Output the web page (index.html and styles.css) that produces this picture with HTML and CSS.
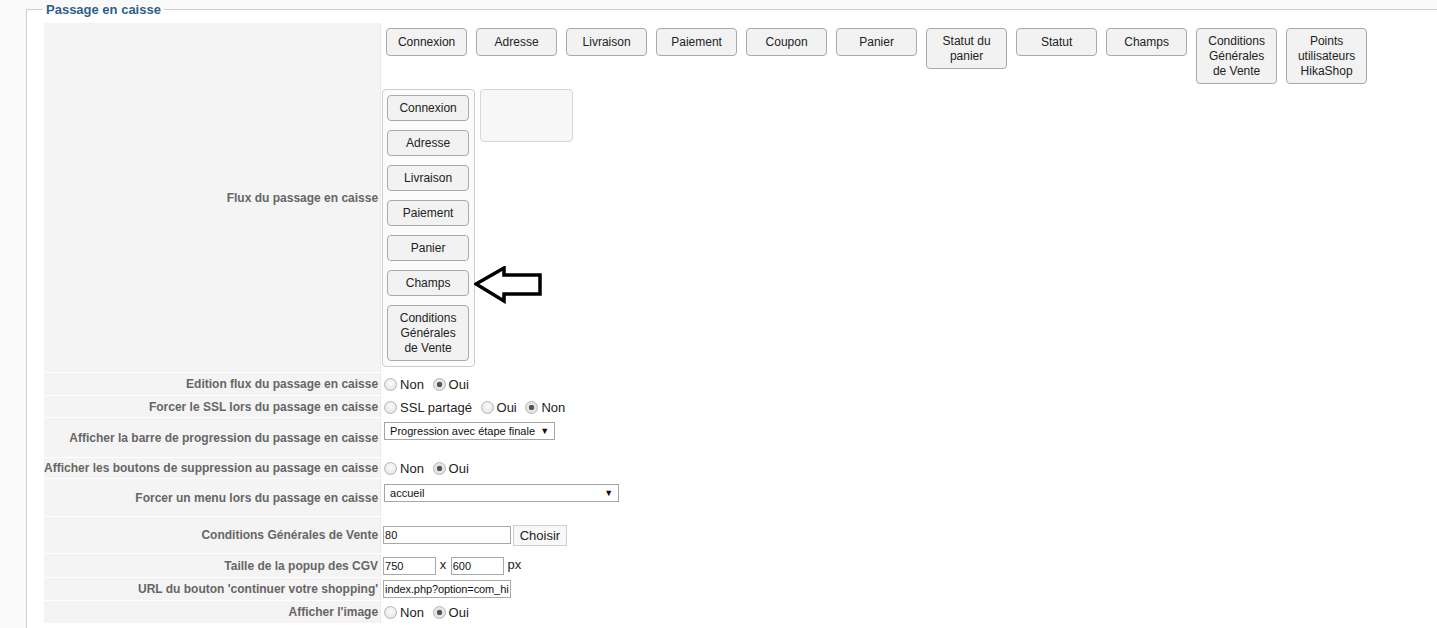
FILE: index.html
```html
<!DOCTYPE html>
<html lang="fr">
<head>
  <meta charset="UTF-8" />
  <title>Configuration – Passage en caisse</title>
  <link rel="stylesheet" href="styles.css">
</head>
<body>
  <fieldset class="adminform">
    <legend>Passage en caisse</legend>
    <table class="admintable">
      <tr>
        <td class="key">Flux du passage en caisse</td>
        <td class="value flow">
          <div class="available">
            <div class="step">Connexion</div>
            <div class="step">Adresse</div>
            <div class="step">Livraison</div>
            <div class="step">Paiement</div>
            <div class="step">Coupon</div>
            <div class="step">Panier</div>
            <div class="step">Statut du panier</div>
            <div class="step">Statut</div>
            <div class="step">Champs</div>
            <div class="step">Conditions Générales de Vente</div>
            <div class="step">Points utilisateurs HikaShop</div>
          </div>
          <div class="workflow">
            <div class="column">
              <div class="step">Connexion</div>
              <div class="step">Adresse</div>
              <div class="step">Livraison</div>
              <div class="step">Paiement</div>
              <div class="step">Panier</div>
              <div class="step">Champs</div>
              <div class="step">Conditions Générales de Vente</div>
              <svg class="pointer" width="70" height="38" viewBox="0 0 70 38">
                <path d="M2 18 L30 2 L30 9 L66 9 L66 28 L30 28 L30 35 Z" fill="#fff" stroke="#000" stroke-width="3.5" stroke-linejoin="miter" />
              </svg>
            </div>
            <div class="column empty"></div>
          </div>
        </td>
      </tr>
      <tr class="r2">
        <td class="key">Edition flux du passage en caisse</td>
        <td class="value radios">
          <label class="choice"><input type="radio" name="edit" /> Non</label>
          <label class="choice"><input type="radio" name="edit" checked /> Oui</label>
        </td>
      </tr>
      <tr class="r3">
        <td class="key">Forcer le SSL lors du passage en caisse</td>
        <td class="value radios">
          <label class="choice"><input type="radio" name="ssl" /> SSL partagé</label>
          <label class="choice"><input type="radio" name="ssl" /> Oui</label>
          <label class="choice"><input type="radio" name="ssl" checked /> Non</label>
        </td>
      </tr>
      <tr class="r4">
        <td class="key">Afficher la barre de progression du passage en caisse</td>
        <td class="value top">
          <span class="select small">Progression avec étape finale<span class="arrow">▼</span></span>
        </td>
      </tr>
      <tr class="r5">
        <td class="key">Afficher les boutons de suppression au passage en caisse</td>
        <td class="value radios">
          <label class="choice"><input type="radio" name="del" /> Non</label>
          <label class="choice"><input type="radio" name="del" checked /> Oui</label>
        </td>
      </tr>
      <tr class="r6">
        <td class="key">Forcer un menu lors du passage en caisse</td>
        <td class="value top">
          <span class="select wide">accueil<span class="arrow">▼</span></span>
        </td>
      </tr>
      <tr class="r7">
        <td class="key">Conditions Générales de Vente</td>
        <td class="value">
          <input class="text" type="text" value="80" />
          <button class="pick">Choisir</button>
        </td>
      </tr>
      <tr class="r8">
        <td class="key">Taille de la popup des CGV</td>
        <td class="value">
          <input class="text short" type="text" value="750" /> x <input class="text short" type="text" value="600" /> px
        </td>
      </tr>
      <tr class="r9">
        <td class="key">URL du bouton 'continuer votre shopping'</td>
        <td class="value">
          <input class="text" type="text" value="index.php?option=com_hikashop" />
        </td>
      </tr>
      <tr class="r10">
        <td class="key">Afficher l'image</td>
        <td class="value radios">
          <label class="choice"><input type="radio" name="img" /> Non</label>
          <label class="choice"><input type="radio" name="img" checked /> Oui</label>
        </td>
      </tr>
    </table>
  </fieldset>
</body>
</html>
```

FILE: styles.css
```css
html, body {
  overflow: hidden;
}

body {
  margin: 0;
  background: #f9f9f9;
  font-family: 'Liberation Sans', Arial, sans-serif;
  font-size: 12px;
  color: #222;
}

fieldset.adminform {
  width: 1500px;
  margin: 2px 0 0 26px;
  padding: 5px 0 60px 16px;
  border: 1px solid #cfcfcf;
  border-right: none;
  background: #fff;
}

legend {
  padding: 0 3px;
  font-size: 13px;
  line-height: 15px;
  font-weight: bold;
  color: #2e5f8c;
}

table.admintable {
  border-collapse: separate;
  border-spacing: 1px;
}

td.key {
  width: 330px;
  padding: 0 2px 0 0;
  background: #f4f4f4;
  border-right: 1px solid #e8e8e8;
  text-align: right;
  vertical-align: middle;
  font-weight: bold;
  color: #666;
  white-space: nowrap;
}

td.value {
  padding: 0;
  vertical-align: middle;
  font-size: 13px;
  white-space: nowrap;
}

td.value.radios {
  padding-top: 3px;
}

td.value.top {
  vertical-align: top;
}

td.flow {
  padding: 5px 0 5px 0;
  vertical-align: top;
}

.available {
  display: flex;
  align-items: flex-start;
  gap: 9px;
  margin-left: 4px;
}

.step {
  box-sizing: border-box;
  width: 81px;
  min-height: 28px;
  padding: 5px 9px 4px;
  display: flex;
  align-items: center;
  justify-content: center;
  text-align: center;
  font-size: 12px;
  line-height: 15px;
  color: #222;
  background: #f2f2f2;
  border: 1px solid #a9a9a9;
  border-radius: 4px;
  white-space: normal;
}

.workflow {
  display: flex;
  align-items: flex-start;
  gap: 5px;
  margin-top: 5px;
}

.column {
  position: relative;
  box-sizing: border-box;
  width: 93px;
  padding: 5px 4px;
  border: 1px solid #cdcdcd;
  border-radius: 4px;
  background: #fbfbfb;
  display: flex;
  flex-direction: column;
  gap: 9px;
}

.column .step {
  width: 82px;
  min-height: 26px;
}

.column.empty {
  height: 53px;
  background: #f7f7f7;
  border-color: #d6d6d6;
}

.pointer {
  position: absolute;
  left: 91px;
  top: 176px;
}

tr.r2 { height: 22px; }
tr.r3 { height: 21px; }
tr.r4 { height: 39px; }
tr.r5 { height: 19px; }
tr.r6 { height: 37px; }
tr.r7 { height: 36px; }
tr.r8 { height: 23px; }
tr.r9 { height: 22px; }
tr.r10 { height: 22px; }

tr.r4 td.value { padding-top: 4px; }
tr.r6 td.value { padding-top: 5px; }

.choice {
  display: inline-flex;
  align-items: center;
  margin-right: 3px;
  color: #222;
}

.choice input[type="radio"] {
  appearance: none;
  -webkit-appearance: none;
  box-sizing: border-box;
  width: 13px;
  height: 13px;
  margin: 0 3px 0 2px;
  border: 1px solid #b4b4b4;
  border-radius: 50%;
  background: radial-gradient(circle at 50% 40%, #fdfdfd, #dedede);
}

.choice input[type="radio"]:checked {
  background: radial-gradient(circle, #555 0, #555 2.5px, #e3e3e3 3px, #e8e8e8);
}

.select {
  position: relative;
  display: inline-block;
  box-sizing: border-box;
  height: 18px;
  margin-left: 2px;
  padding: 0 0 0 5px;
  border: 1px solid #a6a6a6;
  background: #fff;
  font-size: 11px;
  line-height: 16px;
  color: #111;
}

.select.small { width: 171px; }
.select.wide { width: 235px; }

.select .arrow {
  position: absolute;
  right: 5px;
  top: 0;
  font-size: 9px;
  color: #111;
}

input.text {
  box-sizing: border-box;
  width: 128px;
  height: 18px;
  margin: 0 0 0 1px;
  padding: 0 1px;
  border: 1px solid #a9a9a9;
  font-family: 'Liberation Sans', Arial, sans-serif;
  font-size: 11px;
  letter-spacing: -0.1px;
  color: #111;
  vertical-align: middle;
}

input.text.short {
  width: 53px;
}

button.pick {
  box-sizing: border-box;
  height: 21px;
  margin-left: -2px;
  padding: 0 6px;
  border: 1px solid #cfcfcf;
  background: #f8f8f8;
  font-family: 'Liberation Sans', Arial, sans-serif;
  font-size: 13px;
  color: #222;
  vertical-align: middle;
}
```
